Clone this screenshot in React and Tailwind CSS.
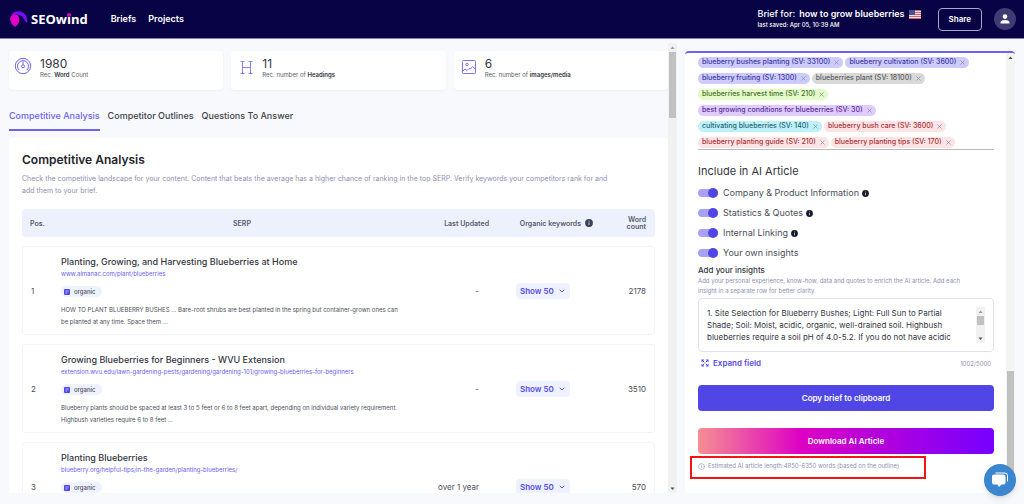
import { ChevronDown, Expand, Info } from 'lucide-react'

const stats = [
  { icon: 'count', value: '1980', label: <>Rec. <b className="font-semibold text-[#33363f]">Word</b> Count</> },
  { icon: 'heading', value: '11', label: <>Rec. number of <b className="font-semibold text-[#33363f]">Headings</b></> },
  { icon: 'image', value: '6', label: <>Rec. number of <b className="font-semibold text-[#33363f]">images/media</b></> },
]

const tabs = ['Competitive Analysis', 'Competitor Outlines', 'Questions To Answer']

const results = [
  {
    title: 'Planting, Growing, and Harvesting Blueberries at Home',
    url: 'www.almanac.com/plant/blueberries',
    text: 'HOW TO PLANT BLUEBERRY BUSHES ... Bare-root shrubs are best planted in the spring but container-grown ones can be planted at any time. Space them ...',
    updated: '-',
    words: 2178,
  },
  {
    title: 'Growing Blueberries for Beginners - WVU Extension',
    url: 'extension.wvu.edu/lawn-gardening-pests/gardening/gardening-101/growing-blueberries-for-beginners',
    text: 'Blueberry plants should be spaced at least 3 to 5 feet or 6 to 8 feet apart, depending on individual variety requirement. Highbush varieties require 6 to 8 feet ...',
    updated: '-',
    words: 3510,
  },
  {
    title: 'Planting Blueberries',
    url: 'blueberry.org/helpful-tips/in-the-garden/planting-blueberries/',
    text: '',
    updated: 'over 1 year',
    words: 570,
  },
]

const indigo = 'bg-[#cdcbfb] text-[#4038a8]'
const red = 'bg-[#fde4e4] text-[#a83038]'

const keywords = [
  [['blueberry bushes planting (SV: 33100)', indigo], ['blueberry cultivation (SV: 3600)', indigo]],
  [['blueberry fruiting (SV: 1300)', indigo], ['blueberries plant (SV: 18100)', 'bg-[#d9d9d9] text-[#5c5c5c]']],
  [['blueberries harvest time (SV: 210)', 'bg-[#e3fbc8] text-[#48702a]']],
  [['best growing conditions for blueberries (SV: 30)', 'bg-[#dfcbfd] text-[#5a2c96]']],
  [['cultivating blueberries (SV: 140)', 'bg-[#bdf0f8] text-[#1f6675]'], ['blueberry bush care (SV: 3600)', red]],
  [['blueberry planting guide (SV: 210)', red], ['blueberry planting tips (SV: 170)', red]],
]

const options = [
  { id: 'company', label: 'Company & Product Information', info: true },
  { id: 'stats', label: 'Statistics & Quotes', info: true },
  { id: 'linking', label: 'Internal Linking', info: true },
  { id: 'own', label: 'Your own insights', info: false },
]

const insights =
  '1. Site Selection for Blueberry Bushes; Light: Full Sun to Partial Shade; Soil: Moist, acidic, organic, well-drained soil. Highbush blueberries require a soil pH of 4.0-5.2. If you do not have acidic'

function Logo() {
  return (
    <a href="#" className="flex items-center gap-[3px]">
      <svg width="18" height="16" viewBox="0 0 18 16" aria-hidden="true">
        <path d="M1 4.200C3 1.200 6.500-.2 10.200.5c4.600.9 7.300 5 7.200 11.300-1.300-.4-2.300-1.300-2.900-2.800C13.300 6 11 4 8 3.500 5.500 3.100 3 3.300 1 4.200z" fill="#7a0bff" />
        <path d="M4.800 3.200c2.800 0 4.600 2.200 4.600 5.400 0 3-1.600 5.600-4 7.200C2.200 14.300.2 11.500.2 8.300c0-3 1.800-5.100 4.600-5.100z" fill="#e100c8" />
      </svg>
      <span className="font-['Open_Sans',sans-serif] text-[13px] leading-4 font-bold text-white">
        SEOw
        <span className="relative">
          i
          <span className="absolute top-[3px] left-0 size-[4px] rounded-full bg-[#e100c8]" />
        </span>
        nd
      </span>
    </a>
  )
}

function StatIcon({ name }) {
  if (name === 'count') {
    return (
      <svg width="18" height="18" viewBox="0 0 18 18" fill="none" stroke="#6d63ee" aria-hidden="true">
        <circle cx="9" cy="9" r="7.700" />
        <path d="M5.300 13.200a5.500 5.500 0 1 1 7.400 0" />
        <path d="M9 4.500v3" />
        <circle cx="9" cy="9.300" r="1.500" />
      </svg>
    )
  }
  if (name === 'heading') {
    return (
      <svg width="18" height="18" viewBox="0 0 18 18" fill="none" stroke="#8a82f2" aria-hidden="true">
        <path d="M6.500 4.500v12M14.500 4.500v12M6.500 10.500h8M4.500 4.500h4M12.500 4.500h4M4.500 16.500h4M12.500 16.500h4" />
      </svg>
    )
  }
  return (
    <svg width="18" height="18" viewBox="0 0 18 18" fill="none" stroke="#7c73f0" aria-hidden="true">
      <rect x="3.500" y="3.500" width="13" height="13" rx="1" />
      <circle cx="8" cy="7.500" r="1.200" />
      <path d="M3.500 14.500l2.500-2.500 2 1.500 2-2 1.500.5 2-2.500 3 2.500" />
    </svg>
  )
}

function InfoDot({ className }) {
  return (
    <svg viewBox="0 0 8 8" className={className} aria-hidden="true">
      <circle cx="4" cy="4" r="3.900" fill="currentColor" />
      <path d="M4 3.500v2.500M4 1.800v.9" stroke="#fff" strokeWidth=".8" />
    </svg>
  )
}

function Arrow({ up, color = '#505050' }) {
  return (
    <svg viewBox="0 0 9 9" className="w-full shrink-0" aria-hidden="true">
      <path d={up ? 'M2.500 6h4l-2-2.500z' : 'M2.500 3.500h4l-2 2.500z'} fill={color} />
    </svg>
  )
}

function Header() {
  return (
    <header className="flex h-[39px] shrink-0 items-center border-b border-[#8480b8] bg-[#070345] pr-2 pl-[10px] text-white">
      <Logo />
      <nav className="ml-[23px] flex gap-3 text-[9px] leading-3 font-semibold">
        <a href="#">Briefs</a>
        <a href="#">Projects</a>
      </nav>
      <div className="mr-[17px] ml-auto">
        <div className="flex items-center text-[9px] leading-3">
          <span className="font-medium">Brief for:</span>
          <span className="ml-1 font-semibold">how to grow blueberries</span>
          <svg width="12" height="9" viewBox="0 0 12 9" className="ml-1" role="img" aria-label="United States">
            <path fill="#f0dfe4" d="M0 0h12v9H0z" />
            <path stroke="#d5616f" d="M0 .5h12M0 2.500h12M0 4.500h12M0 6.500h12M0 8.500h12" />
            <path fill="#46518f" d="M0 0h6v5H0z" />
          </svg>
        </div>
        <div className="text-[6px] leading-[10px] font-medium">last saved: Apr 05, 10:39 AM</div>
      </div>
      <button className="h-[23px] rounded-[4px] border border-[#a9a7c4] px-[10px] text-[8px] font-semibold">Share</button>
      <button aria-label="Account" className="ml-3 flex size-[22px] items-center justify-center rounded-full bg-[#3f3b74]">
        <svg width="10" height="10" viewBox="0 0 10 10" fill="#fff" aria-hidden="true">
          <circle cx="5" cy="2.600" r="2.300" />
          <path d="M.6 9.500V8.300C.6 6.700 3 6 5 6s4.400.7 4.400 2.300v1.200z" />
        </svg>
      </button>
    </header>
  )
}

function ResultRow({ result, position }) {
  const cell = 'border-y border-[#f3f4f9] text-[8px]'
  return (
    <tr className="text-[#4b4f5a]">
      <td className={`${cell} rounded-l-[4px] border-l pl-2`}>{position}</td>
      <td className={`${cell} px-2 pt-[9px] pb-[6px]`}>
        <h3 className="text-[9px] leading-3 font-medium text-[#33363f]">{result.title}</h3>
        <a href="#" className="block text-[6px] leading-3 text-[#6a60ee]">{result.url}</a>
        <span className="mt-[6px] flex h-[11px] w-fit items-center gap-1 rounded-full bg-[#eef2ff] pr-[6px] pl-[3px] text-[6px] font-medium">
          <svg width="6" height="6" viewBox="0 0 6 6" aria-hidden="true">
            <rect width="6" height="6" rx="1" fill="#4f46e5" />
            <path d="M1.300 1.800h3.400M1.300 3h3.400M1.300 4.200h2" stroke="#c9c6fb" strokeWidth=".6" />
          </svg>
          organic
        </span>
        <p className="mt-[7px] min-h-6 pr-6 text-[6px] leading-3">{result.text}</p>
      </td>
      <td className={`${cell} pr-[10px] text-right`}>{result.updated}</td>
      <td className={`${cell} pl-[27px]`}>
        <button className="flex h-4 items-center gap-1 rounded-[4px] bg-[#eef2ff] px-1 text-[8px] font-semibold text-[#564de6]">
          Show 50
          <ChevronDown size={8} strokeWidth={3} />
        </button>
      </td>
      <td className={`${cell} rounded-r-[4px] border-r pr-2 text-right`}>{result.words}</td>
    </tr>
  )
}

function Analysis() {
  return (
    <section className="mt-[7px] rounded-[4px] bg-white px-[13px] pt-[14px]">
      <h2 className="text-[12px] leading-4 font-semibold text-[#22252e]">Competitive Analysis</h2>
      <p className="mt-[5px] text-[7px] leading-3 text-[#8f8fb3]">
        Check the competitive landscape for your content. Content that beats the average has a higher chance of ranking
        in the top SERP. Verify keywords your competitors rank for and
        <br />
        add them to your brief.
      </p>
      <table className="mt-[3px] w-full table-fixed border-separate border-spacing-x-0 border-spacing-y-[9px]">
        <thead>
          <tr className="h-7 text-[7px] leading-[7px] text-[#565b6b]">
            <th className="w-[31px] rounded-l-[4px] bg-[#edf1fe] pl-2 text-left font-semibold">Pos.</th>
            <th className="bg-[#edf1fe] font-semibold">SERP</th>
            <th className="w-[58px] bg-[#edf1fe] text-right font-semibold">Last Updated</th>
            <th className="w-[110px] bg-[#edf1fe] pr-[6px] font-semibold">
              <span className="flex items-center justify-end gap-1">
                Organic keywords
                <InfoDot className="size-2 text-[#3a4256]" />
              </span>
            </th>
            <th className="w-[56px] rounded-r-[4px] bg-[#edf1fe] pr-[9px] pl-5 text-right font-semibold">Word count</th>
          </tr>
        </thead>
        <tbody>
          {results.map((result, i) => (
            <ResultRow key={result.url} result={result} position={i + 1} />
          ))}
        </tbody>
      </table>
    </section>
  )
}

function MainPane() {
  return (
    <main className="mb-[11px] flex min-w-0 flex-1">
      <div className="min-w-0 flex-1 overflow-hidden pt-3 pl-[9px]">
        <div className="grid grid-cols-3 gap-2">
          {stats.map((stat) => (
            <div key={stat.icon} className="flex h-[39px] gap-2 rounded-[4px] bg-white px-[5px] pt-[6px] shadow-xs">
              <StatIcon name={stat.icon} />
              <div className="text-[#33363f]">
                <div className="text-[12px] leading-[13px]">{stat.value}</div>
                <div className="text-[6px] leading-[9px] text-[#5a5e69]">{stat.label}</div>
              </div>
            </div>
          ))}
        </div>
        <div role="tablist" className="mt-[13px] flex gap-2 text-[9px] leading-3 font-medium">
          {tabs.map((tab, i) => (
            <button
              key={tab}
              role="tab"
              aria-selected={i === 0}
              className={`border-b-2 pt-[7px] pb-[7px] ${i === 0 ? 'border-[#6d63ee] text-[#6d63ee]' : 'border-transparent text-[#3e424c]'}`}
            >
              {tab}
            </button>
          ))}
        </div>
        <Analysis />
      </div>
      <div className="mt-1 flex w-[9px] flex-col bg-[#f1f1f1]">
        <Arrow up color="#9a9a9a" />
        <div className="mx-px h-[66px] bg-[#c1c1c1]" />
        <div className="flex-1" />
        <Arrow />
      </div>
    </main>
  )
}

function Keywords() {
  return (
    <div className="flex flex-col gap-[5px] border-b border-[#b9b9bd] pb-px">
      {keywords.map((row) => (
        <div key={row[0][0]} className="flex gap-[2px]">
          {row.map(([text, color]) => (
            <span key={text} className={`flex h-[11px] items-center gap-1 rounded-full px-1 text-[7px] font-medium whitespace-nowrap ${color}`}>
              {text}
              <button aria-label={`Remove ${text}`} className="text-[#8c8fb0]">
                <svg width="5" height="5" viewBox="0 0 5 5" stroke="currentColor" strokeWidth=".8" aria-hidden="true">
                  <path d="M.5.5l4 4M4.500.5l-4 4" />
                </svg>
              </button>
            </span>
          ))}
        </div>
      ))}
    </div>
  )
}

function Sidebar() {
  return (
    <aside className="mt-3 mr-[9px] mb-[11px] ml-2 flex w-[330px] shrink-0 overflow-hidden rounded-[4px] border-t-2 border-[#6d63ee] bg-white">
      <div className="min-w-0 flex-1 pt-1 pr-3 pl-[13px]">
        <Keywords />

        <h2 className="mt-[14px] text-[11px] leading-[14px] text-[#33363f]">Include in AI Article</h2>
        <div className="mt-[9px] flex flex-col gap-2">
          {options.map((option) => (
            <div key={option.id} className="flex h-3 items-center gap-[3px] text-[9px] text-[#4b4f5a]">
              <input
                id={option.id}
                type="checkbox"
                defaultChecked
                className="relative mr-[2px] h-2 w-5 appearance-none rounded-full bg-[#a6a1f3] before:absolute before:-top-px before:right-0 before:size-[10px] before:rounded-full before:bg-[#4f46e5]"
              />
              <label htmlFor={option.id}>{option.label}</label>
              {option.info && <InfoDot className="size-[7px] text-[#151a2d]" />}
            </div>
          ))}
        </div>

        <label htmlFor="insights" className="mt-[5px] block text-[8px] leading-3 font-medium text-[#33363f]">Add your insights</label>
        <p className="text-[6px] leading-[10px] text-[#8f8fb3]">
          Add your personal experience, know-how, data and quotes to enrich the AI article. Add each
          <br />
          insight in a separate row for better clarity.
        </p>
        <div className="mt-[2px] flex rounded-[4px] border border-[#e1e1ef] p-2">
          <textarea
            id="insights"
            rows={3}
            defaultValue={insights}
            className="block min-w-0 flex-1 resize-none overflow-hidden pr-3 text-[8px] leading-3 text-[#33363f] outline-none"
          />
          <div className="flex w-[9px] flex-col bg-[#f1f1f1]">
            <Arrow up color="#9a9a9a" />
            <div className="mx-px h-[9px] bg-[#c1c1c1]" />
            <div className="flex-1" />
            <Arrow />
          </div>
        </div>
        <div className="mt-[5px] flex h-3 items-center justify-between px-[3px]">
          <button className="flex items-center gap-1 text-[8px] font-semibold text-[#564de6]">
            <Expand size={8} strokeWidth={3} />
            Expand field
          </button>
          <span className="text-[6px] text-[#8f8fb3]">1002/5000</span>
        </div>

        <button className="mt-4 h-[26px] w-full rounded-[4px] bg-[#4f46e5] text-[8px] font-semibold text-white">Copy brief to clipboard</button>
        <button className="mt-[17px] h-[26px] w-full rounded-[4px] bg-linear-to-r/srgb from-[#f68f92] via-[#dd00c4] via-35% to-[#7500ff] text-[8px] font-semibold text-white">
          Download AI Article
        </button>
        <p className="relative mt-[7px] mr-20 flex items-center gap-[3px] text-[6px] leading-[10px] text-[#8f8fb3]">
          <Info size={7} />
          Estimated AI article length:4850-6350 words (based on the outline)
          <span className="absolute -top-[5px] -right-3 -bottom-2 -left-2 border-2 border-[#f51414]" />
        </p>
      </div>
      <div className="flex w-[9px] flex-col bg-[#f4f4f4]">
        <Arrow up />
        <div className="flex-1" />
        <div className="mx-px mb-3 h-[110px] bg-[#c1c1c1]" />
      </div>
    </aside>
  )
}

export default function App() {
  return (
    <div className="flex h-screen flex-col overflow-hidden bg-[#f8f9fc] font-[Inter,sans-serif]">
      <Header />
      <div className="flex min-h-0 flex-1">
        <MainPane />
        <Sidebar />
      </div>
      <button aria-label="Open chat" className="fixed right-2 bottom-2 flex size-8 items-center justify-center rounded-full bg-[#3a86cf] shadow-md">
        <svg width="18" height="18" viewBox="0 0 18 18" aria-hidden="true">
          <path d="M4.500 2h9.500a2.500 2.500 0 0 1 2.500 2.500v6" fill="none" stroke="#fff" />
          <path d="M3 3.500h9.500a2 2 0 0 1 2 2v6a2 2 0 0 1-2 2H10.500L8 16l-1.500-2.500H3a2 2 0 0 1-2-2v-6a2 2 0 0 1 2-2z" fill="#fff" />
        </svg>
      </button>
    </div>
  )
}
